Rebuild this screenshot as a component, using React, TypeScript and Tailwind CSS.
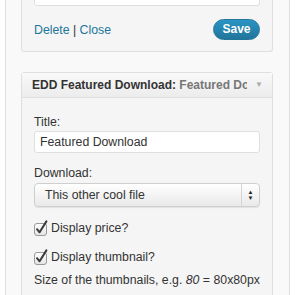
import React from 'react';

const CheckBox: React.FC = () => (
  <svg width="15" height="16" viewBox="0 0 15 16" className="shrink-0">
    <defs>
      <linearGradient id="cbg" x1="0" y1="0" x2="0" y2="1">
        <stop offset="0" stopColor="#ffffff" />
        <stop offset="1" stopColor="#e4e4e4" />
      </linearGradient>
    </defs>
    <rect x="0.5" y="3.5" width="12" height="12" rx="2.5" fill="url(#cbg)" stroke="#9a9a9a" />
    <path d="M3 9.2 L5.6 12.3 L12.4 1.4" fill="none" stroke="#3a3a3a" strokeWidth="2" strokeLinecap="round" strokeLinejoin="round" />
  </svg>
);

const App: React.FC = () => {
  return (
    <div className="w-[295px] h-[295px] overflow-hidden bg-white font-['Liberation_Sans',Arial,sans-serif] text-[#333]">
      <div className="ml-[5px] flex h-full w-[285px] flex-col border-x border-[#dfdfdf] bg-[#f9f9f9] pl-[15px]">
        {/* widget above, cut off at the top */}
        <div className="mt-[-30px] w-[252px] shrink-0 rounded-b-[3px] border border-t-0 border-[#dfdfdf] bg-[#f5f5f5] px-[12px] pb-[11px]">
          <div className="h-[36px] rounded-[3px] border border-[#dfdfdf] bg-white" />
          <div className="mt-[13px] flex items-center justify-between">
            <div className="text-[12.3px] leading-[16px]">
              <span className="text-[#21759b]">Delete</span>
              <span className="text-[#333]"> | </span>
              <span className="text-[#21759b]">Close</span>
            </div>
            <button className="h-[21px] w-[47px] rounded-full border border-[#21759b] bg-gradient-to-b from-[#2a95c5] to-[#21759b] text-[12px] font-bold leading-[19px] text-white">
              Save
            </button>
          </div>
        </div>

        {/* EDD widget */}
        <div className="mt-[20px] w-[252px] shrink-0 rounded-[3px] border border-[#dfdfdf] bg-[#f5f5f5]">
          <div className="flex h-[25px] items-center border-b border-[#dfdfdf] bg-gradient-to-b from-[#f9f9f9] to-[#ececec] pl-[10px] pr-[9px]">
            <div className="min-w-0 flex-1 overflow-hidden whitespace-nowrap text-[12px] font-bold leading-[16px] text-[#333]">
              EDD Featured Download: <span className="text-[#777]">Featured Download</span>
            </div>
            <span className="ml-[8px] shrink-0 text-[8px] leading-[8px] text-[#aaa]">▼</span>
          </div>
          <div className="px-[12px] pt-[16px] pb-[20px] text-[12.3px] leading-[16px]">
            <div>Title:</div>
            <div className="mt-[1px] flex h-[22px] items-center rounded-[3px] border border-[#dfdfdf] bg-white px-[5px]">
              Featured Download
            </div>
            <div className="mt-[12px]">Download:</div>
            <div className="mt-[2px] flex h-[24px] items-center rounded-[4px] border border-[#cfcfcf] bg-gradient-to-b from-white to-[#e9e9e9] shadow-[0_1px_1px_rgba(0,0,0,0.08)]">
              <span className="flex-1 pl-[10px]">This other cool file</span>
              <span className="flex h-full w-[18px] flex-col items-center justify-center border-l border-[#d4d4d4] text-[6px] leading-[6px] text-[#222]">
                <span>▲</span>
                <span>▼</span>
              </span>
            </div>
            <div className="mt-[13px] flex items-center gap-[2px]">
              <CheckBox />
              <span>Display price?</span>
            </div>
            <div className="mt-[13px] flex items-center gap-[2px]">
              <CheckBox />
              <span>Display thumbnail?</span>
            </div>
            <div className="mt-[7px] whitespace-nowrap">
              Size of the thumbnails, e.g. <em>80</em> = 80x80px
            </div>
          </div>
        </div>
      </div>
    </div>
  );
};

export default App;
